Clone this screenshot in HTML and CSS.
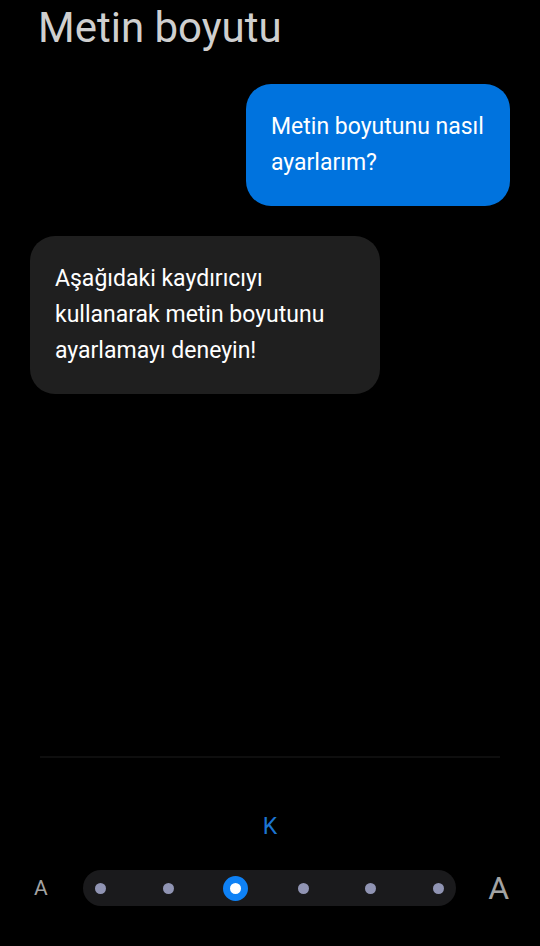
FILE: index.html
```html
<!DOCTYPE html>
<html lang="tr">
<head>
  <meta charset="UTF-8">
  <meta name="viewport" content="width=device-width, initial-scale=1.0">
  <title>Metin boyutu</title>
  <link rel="stylesheet" href="styles.css">
</head>
<body>

<header>
  <h1>Metin boyutu</h1>
</header>

<main class="chat">
  <p class="bubble sent">Metin boyutunu nasıl ayarlarım?</p>
  <p class="bubble received">Aşağıdaki kaydırıcıyı kullanarak metin boyutunu ayarlamayı deneyin!</p>
</main>

<footer>
  <label class="size-name" for="text-size">K</label>
  <div class="size-row">
    <span class="small-a">A</span>
    <div class="slider">
      <div class="dots">
        <i></i><i></i><i></i><i></i><i></i><i></i>
      </div>
      <input type="range" id="text-size" min="0" max="5" step="1" value="2">
    </div>
    <span class="large-a">A</span>
  </div>
</footer>

</body>
</html>
```

FILE: styles.css
```css
* { margin: 0; padding: 0; box-sizing: border-box; }
body {
  display: flex;
  flex-direction: column;
  min-height: 100vh;
  background: #000;
  color: #fff;
  font-family: Roboto, "Noto Sans", sans-serif;
}
header {
  padding: 3px 38px 0;
}
h1 {
  font-size: 42px;
  font-weight: 400;
  line-height: 50px;
  color: #cfcfcf;
}
.chat {
  display: flex;
  flex: 1;
  flex-direction: column;
  gap: 30px;
  padding: 31px 30px;
}
.bubble {
  border-radius: 25px;
  padding: 25px;
  font-size: 23px;
  line-height: 36px;
}
.sent {
  align-self: flex-end;
  width: 55%;
  background: #0073de;
}
.received {
  align-self: flex-start;
  width: 73%;
  background: #1f1f1f;
}
footer {
  padding: 0 30px 40px;
}
footer::before {
  content: "";
  display: block;
  height: 2px;
  margin: 0 10px;
  background: #0e0e0e;
}
.size-name {
  display: block;
  padding: 51px 0 25px;
  font-size: 23px;
  line-height: 36px;
  text-align: center;
  color: #1c75d1;
}
.size-row {
  display: grid;
  grid-template-columns: 53px 1fr 54px;
  align-items: center;
  color: #a3a3a3;
}
.small-a {
  padding-left: 4px;
  font-size: 21px;
  line-height: 36px;
}
.large-a {
  padding-right: 1px;
  font-size: 32px;
  line-height: 36px;
  text-align: right;
}
.slider {
  display: grid;
  height: 36px;
  border-radius: 18px;
  background: #1a1a1c;
}
.dots,
.slider input {
  grid-area: 1 / 1;
}
.dots {
  display: flex;
  justify-content: space-between;
  align-items: center;
  padding: 0 12px;
}
.dots i {
  width: 11px;
  height: 11px;
  border-radius: 50%;
  background: #9094b3;
}
.slider input {
  -webkit-appearance: none;
  appearance: none;
  z-index: 1;
  width: 100%;
  padding: 0 5px;
  background: transparent;
  cursor: pointer;
}
.slider input::-webkit-slider-thumb {
  -webkit-appearance: none;
  width: 25px;
  height: 25px;
  border: 7px solid #0e81f5;
  border-radius: 50%;
  background: #fff;
}
```
